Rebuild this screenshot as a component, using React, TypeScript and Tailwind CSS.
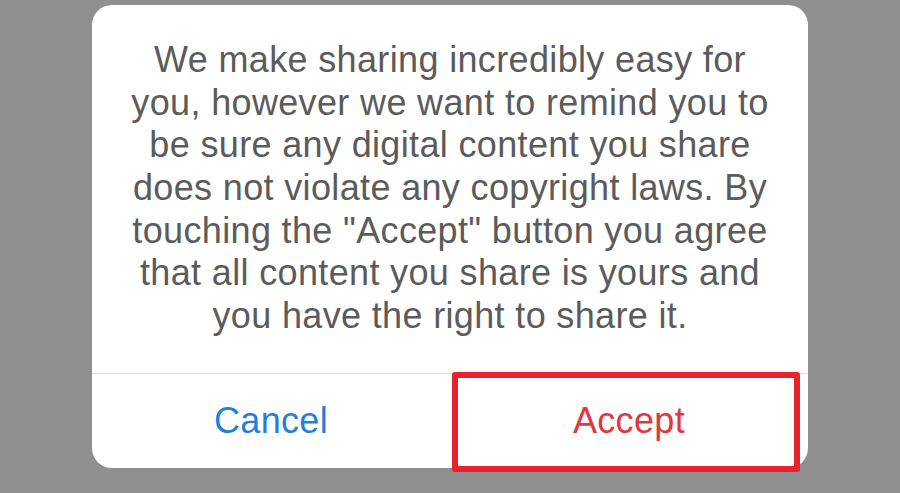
import React from "react";

const lines = [
  "We make sharing incredibly easy for",
  "you, however we want to remind you to",
  "be sure any digital content you share",
  "does not violate any copyright laws. By",
  'touching the "Accept" button you agree',
  "that all content you share is yours and",
  "you have the right to share it.",
];

export default function App() {
  return (
    <div
      className="w-[900px] h-[493px] bg-[#8f8f8f] pt-[5px] flex justify-center overflow-hidden"
      style={{ fontFamily: '"Liberation Sans", Arial, Helvetica, sans-serif' }}
    >
      <div className="relative w-[716px] h-[463px] bg-white rounded-[20px] flex flex-col">
        <div className="h-[368px] pt-[34px] flex flex-col items-center text-[#5b5b5b] text-[36px] leading-[42.67px] tracking-[0.35px]">
          {lines.map((l, i) => (
            <div key={i} className="whitespace-nowrap text-center">
              {l}
            </div>
          ))}
        </div>
        <div className="h-px bg-[#dedede]" />
        <div className="flex flex-1 text-[36px] tracking-[0.35px]">
          <div className="flex-1 flex items-center justify-center text-[#1f7fdb]">Cancel</div>
          <div className="flex-1 flex items-center justify-center text-[#e0363c]">Accept</div>
        </div>
        <div className="absolute left-[360px] top-[367px] w-[348px] h-[100px] border-[6px] border-[#e8212b] rounded-[3px]" />
      </div>
    </div>
  );
}
